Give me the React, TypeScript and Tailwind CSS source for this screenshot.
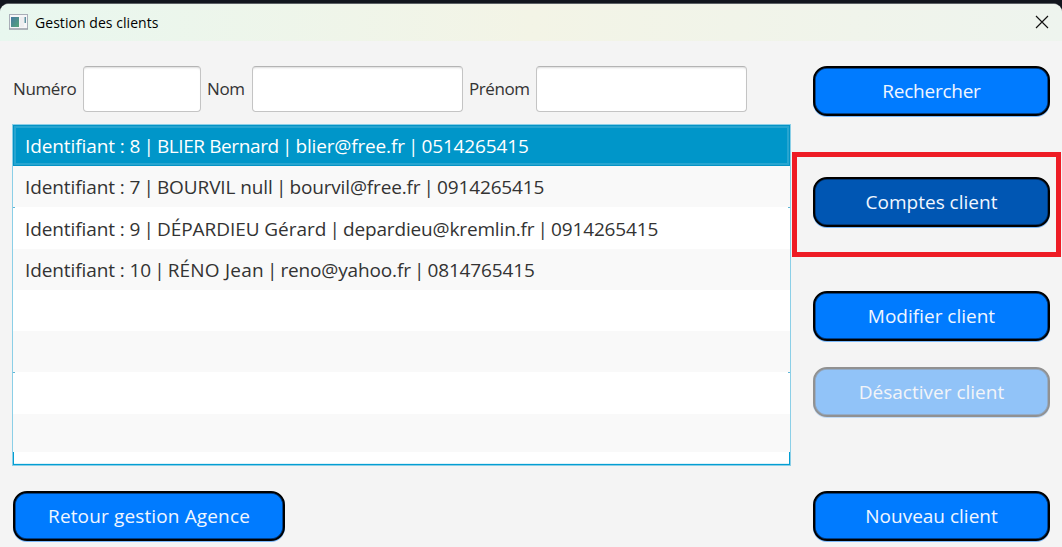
import { clsx } from "clsx";

type Client = { id: number; name: string; email: string; phone: string; nameSpacing: string; height: string; tick?: boolean };

const clients: Client[] = [
  { id: 8, name: "BLIER Bernard", email: "blier@free.fr", phone: "0514265415", nameSpacing: "tracking-[-0.4px]", height: "h-[41px]" },
  { id: 7, name: "BOURVIL null", email: "bourvil@free.fr", phone: "0914265415", nameSpacing: "tracking-[-0.1px]", height: "h-[41px]" },
  { id: 9, name: "DÉPARDIEU Gérard", email: "depardieu@kremlin.fr", phone: "0914265415", nameSpacing: "tracking-[-0.05px]", height: "h-[42px]", tick: true },
  { id: 10, name: "RÉNO Jean", email: "reno@yahoo.fr", phone: "0814765415", nameSpacing: "tracking-[0.2px]", height: "h-[41px]" },
];

const emptyRows = [
  { height: "h-[41px] bg-white", tick: false },
  { height: "h-[41px] bg-[#f9f9f9]", tick: false },
  { height: "h-[42px] bg-white", tick: true },
  { height: "h-[38px] bg-[#f9f9f9]", tick: false },
];

function Tick({ end = false }: { end?: boolean }) {
  return <span className={clsx("h-px w-[2px] self-start bg-[#5fb6d6]", end && "ml-auto")} />;
}

function Pipe() {
  return <span className="-mx-[1.6px]">{" | "}</span>;
}

function ActionButton({ label, className, labelClass, tone = "bg-[#007bff]", disabled = false }: { label: string; className?: string; labelClass?: string; tone?: string; disabled?: boolean }) {
  return (
    <button
      disabled={disabled}
      className={clsx(
        "flex h-[50px] shrink-0 items-center justify-center rounded-[14px] border-2 border-black text-[19px] leading-none text-[#f0f6ff] shadow-[inset_0_0_0_0.7px_#002f66,0_1px_0_#007bff80]",
        tone,
        disabled && "opacity-40",
        className,
      )}
    >
      <span className={labelClass}>{label}</span>
    </button>
  );
}

function Field({ label, labelClass, inputClass }: { label: string; labelClass: string; inputClass: string }) {
  return (
    <label className="flex items-center">
      <span className={clsx("pb-[2px] text-[17px] leading-none tracking-[-0.4px] whitespace-nowrap", labelClass)}>{label}</span>
      <input className={clsx("h-[46px] rounded-[4px] border border-[#c4c4c4] border-t-[#b4b4b4] bg-white shadow-[inset_0_2px_2px_-1px_#dcdcdc] outline-none", inputClass)} />
    </label>
  );
}

export default function App() {
  return (
    <div className="h-[547px] w-[1062px] overflow-hidden bg-[#12161e] pt-[3px] font-['Open_Sans',sans-serif] text-[#333333]">
      <div className="relative flex h-[544px] flex-col overflow-hidden rounded-t-[9px] border-t border-[#5b6064] bg-[#f4f4f4]">
        <header className="flex h-[37px] shrink-0 items-center justify-between bg-linear-to-r from-[#e8f7ef] via-[#f3f4e6] to-[#eef4ee] pr-[13px] pl-[9px] text-black">
          <div className="flex items-center gap-[7px]">
            <svg width="19" height="16" viewBox="0 0 19 16" className="-mt-[2px]">
              <rect x="0.5" y="0.5" width="18" height="14.5" fill="#f6f6f8" stroke="#a9aeb8" />
              <path d="M0 15h19" stroke="#8f949e" />
              <defs>
                <linearGradient id="pane" x1="0" y1="0" x2="1" y2="1">
                  <stop stopColor="#4779a2" />
                  <stop offset="1" stopColor="#55a578" />
                </linearGradient>
              </defs>
              <rect x="2" y="3" width="8" height="10" fill="url(#pane)" />
              <rect x="11" y="3" width="4" height="10" fill="#eeeef0" />
              <rect x="15.5" y="3" width="1.5" height="6" fill="#5f91a0" />
            </svg>
            <h1 className="text-[14px] leading-none tracking-[0.05px]">Gestion des clients</h1>
          </div>
          <svg width="14" height="14" viewBox="0 0 14 14" fill="none" stroke="#111" strokeWidth="1.15" className="-mt-px">
            <path d="M1 1l12 12M13 1L1 13" />
          </svg>
        </header>

        <main className="flex pt-[25px] pr-[12px] pl-[12px]">
          <section className="flex w-[779px] flex-col items-start">
            <div className="flex pl-px">
              <Field label="Numéro" labelClass="w-[70px]" inputClass="w-[118px]" />
              <Field label="Nom" labelClass="ml-[6px] w-[45px]" inputClass="w-[211px]" />
              <Field label="Prénom" labelClass="ml-[6px] w-[67px]" inputClass="w-[211px]" />
            </div>

            <ul className="mt-[12px] flex h-[342px] w-[779px] flex-col border border-[#8bcfe7] bg-white">
              {clients.map((client, i) => (
                <li
                  key={client.id}
                  className={clsx(
                    "flex shrink-0 items-center text-[19px] leading-none tracking-[-0.15px] whitespace-pre",
                    client.height,
                    i === 0
                      ? "bg-[#0096c9] text-white shadow-[inset_0_0_0_1px_#0593c5,inset_0_0_0_3px_#28a5d0]"
                      : i % 2
                        ? "bg-[#f9f9f9]"
                        : "bg-white",
                  )}
                >
                  {client.tick && <Tick />}
                  <span className={clsx("pt-[2px]", client.tick ? "pl-[10px]" : "pl-[12px]")}>
                    <span className="tracking-[-0.1px]">{"Identifiant : "}{client.id}</span>
                    <Pipe />
                    <span className={client.nameSpacing}>{client.name}</span>
                    <Pipe />
                    {client.email}
                    <Pipe />
                    {client.phone}
                  </span>
                  {client.tick && <Tick end />}
                </li>
              ))}
              {emptyRows.map((row, i) => (
                <li key={i} className={clsx("flex shrink-0", row.height)}>
                  {row.tick && <Tick />}
                  {row.tick && <Tick end />}
                </li>
              ))}
              <li className="flex-1 border-x border-b border-[#039ed3] shadow-[inset_0_-1px_0_#dcf2f9]" />
            </ul>

            <ActionButton label="Retour gestion Agence" className="mt-[25px] ml-px w-[272px]" labelClass="tracking-[0.14px]" />
          </section>

          <nav className="ml-[22px] flex w-[237px] flex-col">
            <ActionButton label="Rechercher" labelClass="tracking-[-0.25px]" />
            <ActionButton label="Comptes client" tone="bg-[#0056b3]" className="mt-[61px]" />
            <ActionButton label="Modifier client" className="mt-[64px]" />
            <ActionButton label="Désactiver client" className="mt-[26px]" disabled />
            <ActionButton label="Nouveau client" className="mt-[74px]" />
          </nav>
        </main>

        <div className="pointer-events-none absolute top-[148px] left-[792px] h-[105px] w-[269px] border-[5px] border-[#ee1c25]" />
      </div>
    </div>
  );
}
